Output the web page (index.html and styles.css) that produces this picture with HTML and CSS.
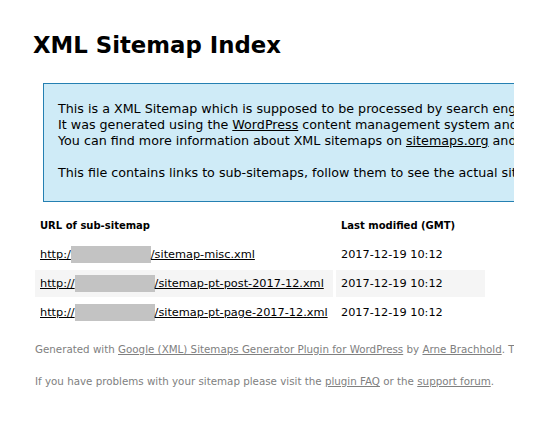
FILE: index.html
```html
<!DOCTYPE html>
<html lang="en">
<head>
    <meta charset="UTF-8">
    <title>XML Sitemap</title>
    <link rel="stylesheet" href="styles.css">
</head>
<body>
    <div class="viewport">
        <div class="content">
            <h1>XML Sitemap Index</h1>

            <div id="intro">
                <p>
                    This is a XML Sitemap which is supposed to be processed by search engines which follow the XML Sitemap standard like Ask.com, Bing, Google and Yahoo.<br>
                    It was generated using the <a href="#">WordPress</a> content management system and the <strong><a href="#">Google Sitemap Generator Plugin</a></strong> by <a href="#">Arne Brachhold</a>.<br>
                    You can find more information about XML sitemaps on <a href="#">sitemaps.org</a> and Google's <a href="#">list of sitemap programs</a>.
                </p>
                <p>This file contains links to sub-sitemaps, follow them to see the actual sitemap content.</p>
            </div>

            <div id="content">
                <table>
                    <tr>
                        <th class="url-col">URL of sub-sitemap</th>
                        <th>Last modified (GMT)</th>
                    </tr>
                    <tr>
                        <td><a href="#">http:/<span class="hidden"></span>/sitemap-misc.xml</a></td>
                        <td>2017-12-19 10:12</td>
                    </tr>
                    <tr class="high">
                        <td><a href="#">http://<span class="hidden"></span>/sitemap-pt-post-2017-12.xml</a></td>
                        <td>2017-12-19 10:12</td>
                    </tr>
                    <tr>
                        <td><a href="#">http://<span class="hidden"></span>/sitemap-pt-page-2017-12.xml</a></td>
                        <td>2017-12-19 10:12</td>
                    </tr>
                </table>
            </div>

            <div id="footer">
                <p>Generated with <a href="#">Google (XML) Sitemaps Generator Plugin for WordPress</a> by <a href="#">Arne Brachhold</a>. This XSLT template is released under the GPL and free to use.</p>
                <p>If you have problems with your sitemap please visit the <a href="#">plugin FAQ</a> or the <a href="#">support forum</a>.</p>
            </div>
        </div>
    </div>
</body>
</html>
```

FILE: styles.css
```css
body {
    font-family: "DejaVu Sans", Verdana, sans-serif;
    font-size: 12.7px;
    margin: 0;
    background-color: white;
    color: black;
}

.viewport {
    width: 514px;
    height: 444px;
    overflow: hidden;
}

.content {
    width: 900px;
    padding: 29px 0 0 33px;
}

h1 {
    font-size: 22.8px;
    line-height: 32px;
    font-weight: bold;
    margin: 0 0 22px 0;
}

#intro {
    background-color: #cfebf7;
    border: 1px #2580b2 solid;
    padding: 5px 14px;
    margin: 0 0 0 10px;
}

#intro p {
    line-height: 16px;
    margin: 16px 0 15px 0;
    white-space: nowrap;
}

#intro p:first-child {
    margin-top: 12px;
}

#intro strong {
    font-weight: normal;
}

a {
    color: black;
}

#content {
    margin-top: 8px;
}

table {
    border-spacing: 3px 2px;
    margin-left: -1px;
}

td,
th {
    font-size: 11.3px;
    padding: 7px 5px;
    line-height: 13px;
}

th {
    font-size: 10px;
    text-align: left;
    padding-right: 30px;
}

.url-col {
    width: 263px;
}

tr.high td {
    background-color: whitesmoke;
}

.hidden {
    padding: 2px 40px;
    background-color: #c3c3c3;
}

#footer {
    padding: 2px;
    margin-top: 13px;
    font-size: 10.3px;
    color: gray;
}

#footer p {
    margin: 0 0 20px 0;
}

#footer a {
    color: gray;
}
```
